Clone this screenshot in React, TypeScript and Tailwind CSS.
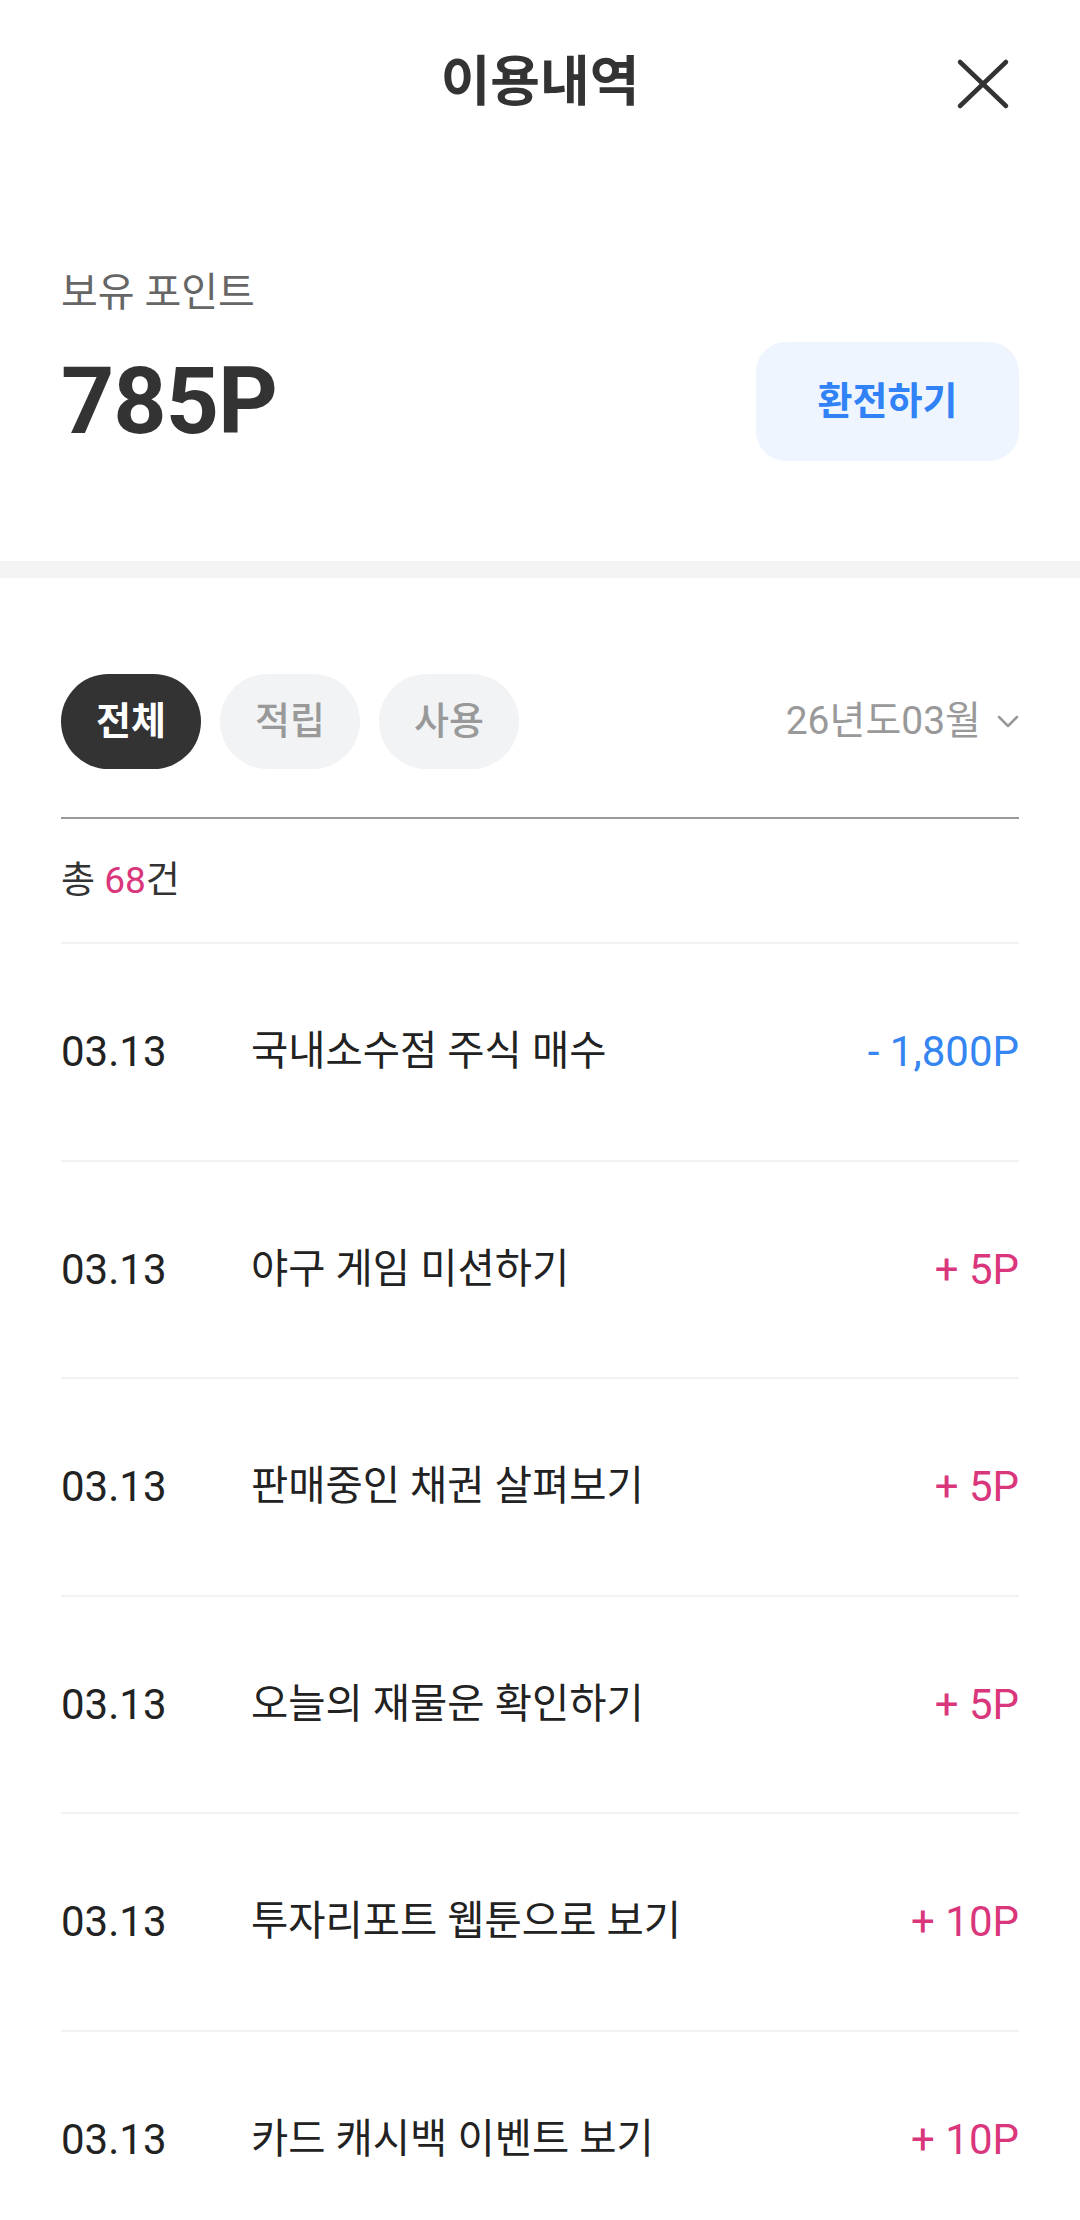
const rows = [
  { date: '03.13', title: '국내소수점 주식 매수', amount: '- 1,800P', minus: true },
  { date: '03.13', title: '야구 게임 미션하기', amount: '+ 5P', minus: false },
  { date: '03.13', title: '판매중인 채권 살펴보기', amount: '+ 5P', minus: false },
  { date: '03.13', title: '오늘의 재물운 확인하기', amount: '+ 5P', minus: false },
  { date: '03.13', title: '투자리포트 웹툰으로 보기', amount: '+ 10P', minus: false },
  { date: '03.13', title: '카드 캐시백 이벤트 보기', amount: '+ 10P', minus: false },
];

const font = 'font-[Roboto,"Noto_Sans_CJK_KR",sans-serif]';

export default function App() {
  return (
    <div className={`min-h-screen bg-white text-[#222] ${font}`}>
      {/* header */}
      <header className="relative h-[165px] flex items-center justify-center">
        <h1 className="text-[54px] font-bold text-[#333] leading-none">이용내역</h1>
        <button className="absolute right-[69px] top-[56px] w-[56px] h-[56px] flex items-center justify-center">
          <svg width="56" height="56" viewBox="0 0 56 56" fill="none" stroke="#333" strokeWidth="4.5" strokeLinecap="round">
            <path d="M5 6 L51 50" />
            <path d="M51 6 L5 50" />
          </svg>
        </button>
      </header>

      {/* points */}
      <section className="px-[61px] pt-[105px] pb-[100px]">
        <p className="text-[40px] leading-[45px] text-[#666]">보유 포인트</p>
        <div className="mt-[27px] flex items-center justify-between">
          <span className="text-[93px] font-bold leading-none text-[#333] tracking-[-1px]">785P</span>
          <button className="w-[263px] h-[119px] rounded-[30px] bg-[#eef5fe] text-[38px] font-bold text-[#3182f6]">
            환전하기
          </button>
        </div>
      </section>

      <div className="h-[17px] bg-[#f4f4f4]" />

      {/* filters */}
      <section className="px-[61px] pt-[96px]">
        <div className="flex items-center justify-between">
          <div className="flex gap-[19px]">
            <button className="w-[140px] h-[95px] rounded-full bg-[#333] text-white text-[38px] font-bold">전체</button>
            <button className="w-[140px] h-[95px] rounded-full bg-[#f2f3f5] text-[#999] text-[38px] font-medium">적립</button>
            <button className="w-[140px] h-[95px] rounded-full bg-[#f2f3f5] text-[#999] text-[38px] font-medium">사용</button>
          </div>
          <button className="flex items-center gap-[16px] text-[39px] text-[#999]">
            <span>26년도03월</span>
            <svg width="22" height="14" viewBox="0 0 22 14" fill="none" stroke="#999" strokeWidth="2.5" strokeLinecap="round" strokeLinejoin="round">
              <path d="M2 2 L11 11 L20 2" />
            </svg>
          </button>
        </div>
        <div className="mt-[48px] h-[2px] bg-[#9a9a9a]" />
        <p className="mt-[41px] mb-[40px] text-[37px] leading-[42px] text-[#333]">
          총 <span className="text-[#d9367c]">68</span>건
        </p>

        <ul>
          {rows.map((r, i) => (
            <li key={i} className="border-t-2 border-[#f2f2f2] h-[217.5px] flex items-center">
              <span className="w-[190px] shrink-0 text-[42px] text-[#222]">{r.date}</span>
              <span className="flex-1 text-[40.5px] text-[#222]">{r.title}</span>
              <span className={`text-[42px] ${r.minus ? 'text-[#3585f2]' : 'text-[#d9367c]'}`}>{r.amount}</span>
            </li>
          ))}
        </ul>
      </section>
    </div>
  );
}
